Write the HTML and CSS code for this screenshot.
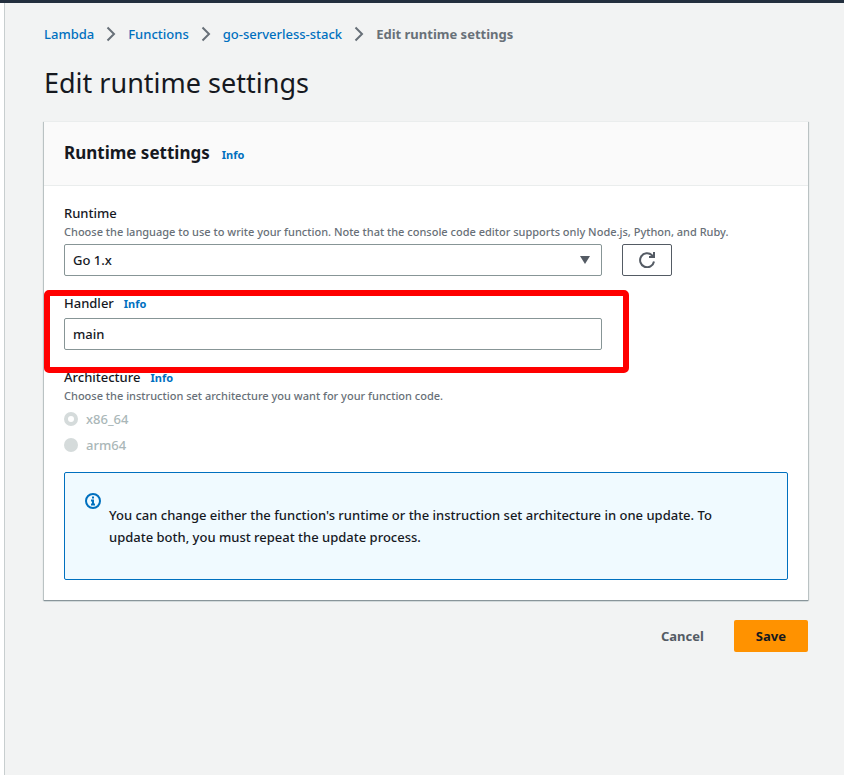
FILE: index.html
```html
<!DOCTYPE html>
<html lang="en">
<head>
<meta charset="utf-8">
<meta name="viewport" content="width=device-width, initial-scale=1">
<title>Edit runtime settings</title>
<link rel="stylesheet" href="styles.css">
</head>
<body>
<main class="page">
  <nav class="breadcrumbs" aria-label="Breadcrumbs">
    <a href="#">Lambda</a>
    <svg class="chevron" viewBox="0 0 10 16" aria-hidden="true"><path d="M1.500 1.500 8 8l-6.500 6.500"/></svg>
    <a href="#">Functions</a>
    <svg class="chevron" viewBox="0 0 10 16" aria-hidden="true"><path d="M1.500 1.500 8 8l-6.500 6.500"/></svg>
    <a href="#">go-serverless-stack</a>
    <svg class="chevron" viewBox="0 0 10 16" aria-hidden="true"><path d="M1.500 1.500 8 8l-6.500 6.500"/></svg>
    <span class="current">Edit runtime settings</span>
  </nav>
  <h1>Edit runtime settings</h1>
  <form>
    <section class="card">
      <header class="card-header">
        <h2>Runtime settings</h2>
        <a class="info" href="#">Info</a>
      </header>
      <div class="card-body">
        <div class="field">
          <div class="label-row"><label for="runtime">Runtime</label></div>
          <p class="hint">Choose the language to use to write your function. Note that the console code editor supports only Node.js, Python, and Ruby.</p>
          <div class="control-row">
            <div class="select-wrap">
              <select class="control" id="runtime"><option>Go 1.x</option></select>
              <svg class="caret" viewBox="0 0 10 8" aria-hidden="true"><path d="M0 0h10L5 8z"/></svg>
            </div>
            <button class="refresh" type="button" aria-label="Refresh">
              <svg viewBox="0 0 16 16" aria-hidden="true"><path d="M15 9.500A7 7 0 1 1 13 3.200L15 5"/><path d="M15 0v5h-5"/></svg>
            </button>
          </div>
        </div>
        <div class="field highlighted">
          <div class="label-row"><label for="handler">Handler</label><a class="info" href="#">Info</a></div>
          <div class="control-row">
            <input class="control" id="handler" type="text" value="main">
          </div>
        </div>
        <fieldset class="field">
          <legend class="label-row"><span>Architecture</span><a class="info" href="#">Info</a></legend>
          <p class="hint">Choose the instruction set architecture you want for your function code.</p>
          <div class="radios">
            <label class="radio"><input type="radio" name="arch" checked disabled>x86_64</label>
            <label class="radio"><input type="radio" name="arch" disabled>arm64</label>
          </div>
        </fieldset>
        <div class="alert">
          <svg viewBox="0 0 16 16" aria-hidden="true"><circle cx="8" cy="8" r="7"/><path d="M8 3.500v2M6 7.500h2V11M6 11.500h4"/></svg>
          <p>You can change either the function's runtime or the instruction set architecture in one update. To update both, you must repeat the update process.</p>
        </div>
      </div>
    </section>
    <div class="actions">
      <button class="button" type="button">Cancel</button>
      <button class="button primary" type="submit">Save</button>
    </div>
  </form>
</main>
</body>
</html>
```
FILE: styles.css
```css
* {
  box-sizing: border-box;
}

body {
  margin: 0;
  min-height: 100vh;
  display: flex;
  padding-left: 4px;
  border-top: 3px solid #232f3e;
  background: #fff;
  color: #16191f;
  font: 500 13px/22px "Noto Sans", sans-serif;
}

h1, h2, p {
  margin: 0;
}

a {
  color: #0070bf;
  text-decoration: none;
}

button, input, select {
  font: inherit;
  color: inherit;
}

.page {
  flex: 1;
  min-width: 0;
  padding: 20px 36px 40px 39px;
  border-left: 1px solid #c8cecf;
  background: #f2f3f3;
}

.breadcrumbs {
  display: flex;
  align-items: center;
  gap: 12px;
}

.chevron {
  width: 10px;
  height: 16px;
  fill: none;
  stroke: #687078;
  stroke-width: 2;
}

.current {
  color: #687078;
  font-weight: 700;
}

h1 {
  margin: 20px 0;
  font-size: 27px;
  line-height: 36px;
  font-weight: 400;
}

.card {
  background: #fff;
  border-top: 1px solid #eaeded;
  box-shadow: 0 1px 1px 0 #89959a, 1px 1px 1px 0 #c5cccc, -1px 1px 1px 0 #c5cccc;
}

.card-header {
  display: flex;
  align-items: baseline;
  gap: 12px;
  padding: 20px 20px 21px;
  border-bottom: 1px solid #eaeded;
  background: #fafafa;
}

h2 {
  font-size: 17px;
  line-height: 22px;
  font-weight: 700;
}

.info {
  font-size: 11px;
  line-height: 16px;
  font-weight: 700;
}

.card-body {
  display: flex;
  flex-direction: column;
  gap: 16px;
  padding: 16px 20px 20px;
}

.field {
  min-width: 0;
  margin: 0;
  padding: 0;
  border: 0;
}

.label-row {
  display: flex;
  align-items: baseline;
  gap: 10px;
  padding: 0;
}

.hint {
  color: #687078;
  font-size: 11px;
  line-height: 16px;
}

.control-row {
  display: grid;
  grid-template-columns: 1fr 166px;
  column-gap: 20px;
  margin-top: 4px;
}

.select-wrap {
  position: relative;
}

.control {
  display: block;
  width: 100%;
  height: 32px;
  padding: 4px 8px;
  border: 1px solid #879596;
  border-radius: 2px;
  background: #fff;
  appearance: none;
}

.caret {
  position: absolute;
  top: 12px;
  right: 12px;
  width: 10px;
  height: 8px;
  fill: #545b64;
  pointer-events: none;
}

.refresh {
  display: grid;
  place-items: center;
  width: 50px;
  height: 32px;
  padding: 0;
  border: 1px solid #545b64;
  border-radius: 2px;
  background: #fff;
}

.refresh svg {
  width: 16px;
  height: 16px;
  fill: none;
  stroke: #545b64;
  stroke-width: 2;
}

.highlighted {
  position: relative;
}

/* Frame drawn over the form to call out the handler field. */
.highlighted::after {
  content: "";
  position: absolute;
  inset: -2px 159px -23px -20px;
  border: 6px solid #f00;
  border-radius: 5px;
  pointer-events: none;
}

.radios {
  display: grid;
  gap: 4px;
  margin-top: 4px;
}

.radio {
  display: flex;
  align-items: center;
  gap: 8px;
  color: #aab7b8;
}

.radio input {
  width: 14px;
  height: 14px;
  margin: 0;
  border-radius: 50%;
  background: #d5dbdb;
  appearance: none;
}

.radio input:checked {
  border: 4px solid #d5dbdb;
  background: #fff;
}

.alert {
  display: flex;
  gap: 8px;
  padding: 20px;
  border: 1px solid #0070bf;
  border-radius: 2px;
  background: #f0faff;
}

.alert svg {
  flex: none;
  width: 16px;
  height: 16px;
  fill: none;
  stroke: #0070bf;
  stroke-width: 2;
}

.alert p {
  padding: 11px 20px 11px 0;
}

.actions {
  display: flex;
  justify-content: flex-end;
  gap: 8px;
  margin-top: 20px;
}

.button {
  height: 32px;
  padding: 4px 22px;
  border: 0;
  border-radius: 2px;
  background: transparent;
  color: #545b64;
  font-weight: 700;
}

.primary {
  background: #ff9200;
  color: #16191f;
}
```
